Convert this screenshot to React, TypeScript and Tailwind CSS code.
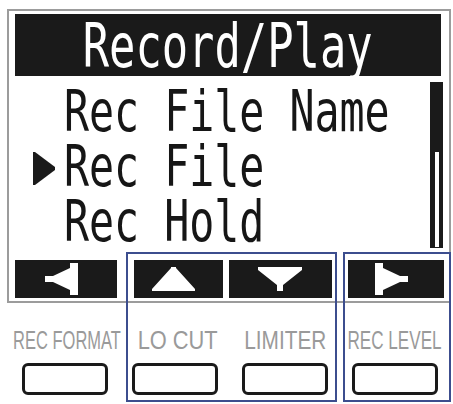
const lcd = "font-['DejaVu_Sans_Mono','Liberation_Mono',monospace]";
const label = "inline-block whitespace-nowrap text-[26px] leading-[30px] text-[#9a9a9a] font-['Liberation_Sans',Arial,sans-serif]";

function Row({ text, selected }: { text: string; selected?: boolean }) {
  return (
    <div className="flex items-start h-[55px] pl-[24px]">
      <div className="w-[22px] shrink-0">
        {selected ? (
          <svg className="mt-[13px]" width="22" height="33" viewBox="0 0 22 33">
            <path d="M0 0 H2 L22 15 V18 L2 33 H0 Z" fill="#1a1a1a" />
          </svg>
        ) : null}
      </div>
      <span
        className={`${lcd} ml-[9px] shrink-0 whitespace-pre text-[57px] leading-[55px] text-[#161616] origin-left scale-x-[0.73]`}
      >
        {text}
      </span>
    </div>
  );
}

export default function App() {
  return (
    <div className="relative w-[453px] h-[404px] bg-white overflow-hidden">
      <div className="ml-[7px] mt-[9px] w-[444px] h-[294px] border-2 border-[#9c9c9c] flex flex-col">
        <div className="ml-[6px] mt-[3px] w-[426px] h-[62px] bg-[#1a1a1a] flex items-start justify-center overflow-hidden">
          <span className={`${lcd} whitespace-pre text-[60px] leading-[64px] text-white scale-x-[0.73]`}>
            Record/Play
          </span>
        </div>
        <div className="flex h-[184px]">
          <div className="flex-1 pt-[8px] overflow-hidden">
            <Row text="Rec File Name" />
            <Row text="Rec File" selected />
            <Row text="Rec Hold" />
          </div>
          <div className="mt-[6px] mr-[6px] w-[13px] h-[166px] flex flex-col">
            <div className="h-[70px] bg-[#1a1a1a]" />
            <div className="flex-1 border-l-[5px] border-r-[4px] border-b-[1px] border-[#1a1a1a] bg-white" />
          </div>
        </div>
        <div className="flex h-[38px]">
          <div className="ml-[6px] w-[102px] bg-[#1a1a1a] flex items-center pl-[30px]">
            <svg width="33" height="32" viewBox="0 0 33 32">
              <path d="M33 0 H25 V5 L8 13 H0 V19 H8 L25 27 V32 H33 Z" fill="#fff" />
            </svg>
          </div>
          <div className="ml-[17px] w-[89px] bg-[#1a1a1a] flex items-center pl-[18px]">
            <svg width="43" height="24" viewBox="0 0 43 24">
              <path d="M0 24 V22 L19 1 V0 H24 V1 L43 22 V24 Z" fill="#fff" />
            </svg>
          </div>
          <div className="ml-[6px] w-[103px] bg-[#1a1a1a] flex items-center pl-[29px]">
            <svg width="44" height="24" viewBox="0 0 44 24">
              <path d="M0 0 H44 V3 L25 18 V24 H19 V18 L0 3 Z" fill="#fff" />
            </svg>
          </div>
          <div className="ml-[16px] w-[96px] bg-[#1a1a1a] flex items-center pl-[27px]">
            <svg width="33" height="32" viewBox="0 0 33 32">
              <path d="M0 0 H8 V5 L25 13 H33 V19 H25 L8 27 V32 H0 Z" fill="#fff" />
            </svg>
          </div>
        </div>
      </div>

      <div className="mt-[22px] h-[30px] flex pl-[10px]">
        <div className="w-[110px] flex justify-center">
          <span className={`${label} scale-x-[0.634] translate-x-[2px]`}>REC FORMAT</span>
        </div>
        <div className="w-[110px] flex justify-center">
          <span className={`${label} scale-x-[0.84] translate-x-[3px]`}>LO CUT</span>
        </div>
        <div className="w-[110px] flex justify-center">
          <span className={`${label} scale-x-[0.8]`}>LIMITER</span>
        </div>
        <div className="w-[110px] flex justify-center">
          <span className={`${label} scale-x-[0.657]`}>REC LEVEL</span>
        </div>
      </div>

      <div className="mt-[8px] flex pl-[10px]">
        {[0, 1, 2, 3].map((i) => (
          <div key={i} className="w-[110px] flex justify-center">
            <div className="w-[86px] h-[32px] border-[3px] border-[#1a1a1a] rounded-[6px] bg-white" />
          </div>
        ))}
      </div>

      <div className="pointer-events-none absolute left-[126px] top-[252px] w-[211px] h-[150px] border-2 border-[#3c4d8e]" />
      <div className="pointer-events-none absolute left-[343px] top-[252px] w-[108px] h-[150px] border-2 border-[#3c4d8e]" />
    </div>
  );
}
